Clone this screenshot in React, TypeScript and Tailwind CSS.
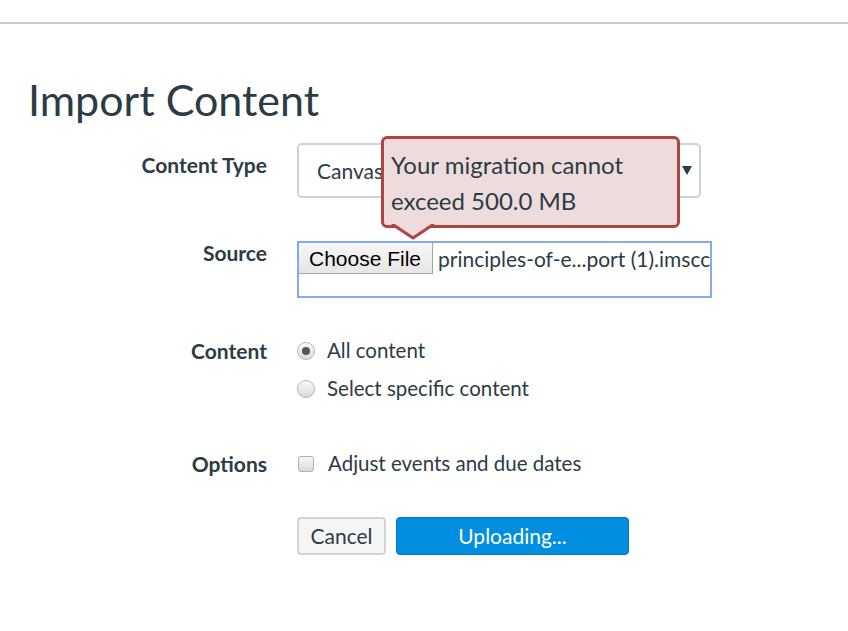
import React from "react";

const txt = "text-[#2d3b45]";

function Label({ children, pt = "pt-0" }: { children: React.ReactNode; pt?: string }) {
  return (
    <div className={`w-[267px] shrink-0 text-right font-bold text-[21px] leading-[25px] ${txt} ${pt}`}>
      {children}
    </div>
  );
}

function Radio({ checked }: { checked?: boolean }) {
  return (
    <span className="flex h-[18px] w-[18px] shrink-0 items-center justify-center rounded-full border border-[#b3b3b3] bg-gradient-to-b from-[#fbfbfb] to-[#dadada] shadow-[inset_0_1px_1px_rgba(255,255,255,0.8)]">
      {checked && <span className="h-[8px] w-[8px] rounded-full bg-[#555]" />}
    </span>
  );
}

export default function App() {
  return (
    <div className="min-h-[631px] w-full bg-white" style={{ fontFamily: "Lato, 'Open Sans', sans-serif" }}>
      <div className="h-[22px] box-content border-b-2 border-[#c7cdd1]" />
      <h1 className={`mt-[50px] pl-[28px] text-[43px] font-normal leading-[52px] ${txt}`}>Import Content</h1>

      {/* Content Type */}
      <div className="mt-[17px] flex items-start">
        <Label pt="pt-[9px]">Content Type</Label>
        <div className="relative ml-[30px]">
          <div className={`flex h-[55px] w-[404px] items-center justify-between rounded-[5px] border-2 border-[#cfd2d4] bg-white pl-[18px] pr-[7px] text-[21px] ${txt}`}>
            <span className="whitespace-nowrap">Canvas Course Export</span>
            <svg width="10" height="9" viewBox="0 0 10 9">
              <polygon points="0,0 10,0 5,9" fill="#2d3b45" />
            </svg>
          </div>
          <div className="absolute left-[84px] top-[-7px] z-10 w-[299px] rounded-[6px] border-[3px] border-[#ad4545] bg-[#eedcdc] pb-[6px] pl-[7px] pt-[8px]">
            <div className={`whitespace-nowrap text-[24px] leading-[36px] ${txt}`}>
              Your migration cannot
              <br />
              exceed 500.0 MB
            </div>
            <svg className="absolute left-[6px] top-[calc(100%-1px)]" width="46" height="17" viewBox="0 0 46 17">
              <polygon points="0,-3 23,13 46,-3" fill="#eedcdc" />
              <polyline points="2,0 23,14 44,0" fill="none" stroke="#ad4545" strokeWidth="3" strokeLinejoin="round" />
            </svg>
          </div>
        </div>
      </div>

      {/* Source */}
      <div className="mt-[42px] flex items-start">
        <Label>Source</Label>
        <div className="ml-[30px] mt-[1px] h-[57px] w-[415px] overflow-hidden border-2 border-[#82abf0] bg-white">
          <div className="flex items-center">
            <span
              className="flex h-[32px] w-[136px] shrink-0 items-center justify-center border border-[#a6a6a6] bg-gradient-to-b from-[#f7f7f7] to-[#e6e6e6] text-[21px] text-black -ml-[2px] -mt-[1px]"
              style={{ fontFamily: "'Liberation Sans', Arial, sans-serif" }}
            >
              Choose File
            </span>
            <span className={`ml-[5px] whitespace-nowrap text-[21px] ${txt}`}>principles-of-e...port (1).imscc</span>
          </div>
        </div>
      </div>

      {/* Content */}
      <div className="mt-[40px] flex items-start">
        <Label>Content</Label>
        <div className={`ml-[30px] flex flex-col gap-[13px] text-[20.5px] leading-[25px] ${txt}`}>
          <div className="flex items-center gap-[12px]">
            <Radio checked />
            <span>All content</span>
          </div>
          <div className="flex items-center gap-[12px]">
            <Radio />
            <span>Select specific content</span>
          </div>
        </div>
      </div>

      {/* Options */}
      <div className="mt-[50px] flex items-start">
        <Label>Options</Label>
        <div className={`ml-[31px] flex items-center gap-[14px] text-[20.5px] leading-[25px] ${txt}`}>
          <span className="h-[16px] w-[16px] shrink-0 rounded-[3px] border border-[#b0b0b0] bg-gradient-to-b from-[#f8f8f8] to-[#d9d9d9]" />
          <span>Adjust events and due dates</span>
        </div>
      </div>

      {/* Buttons */}
      <div className="mt-[41px] flex items-start">
        <div className="w-[267px] shrink-0" />
        <div className="ml-[30px] flex gap-[10px]">
          <button className={`h-[38px] w-[89px] rounded-[4px] border-2 border-[#d0d4d7] bg-[#f5f5f5] text-[21px] ${txt}`}>
            Cancel
          </button>
          <button className="h-[38px] w-[233px] rounded-[4px] border border-[#0a78b8] bg-[#008ee2] text-[21px] text-white">
            Uploading...
          </button>
        </div>
      </div>
    </div>
  );
}
